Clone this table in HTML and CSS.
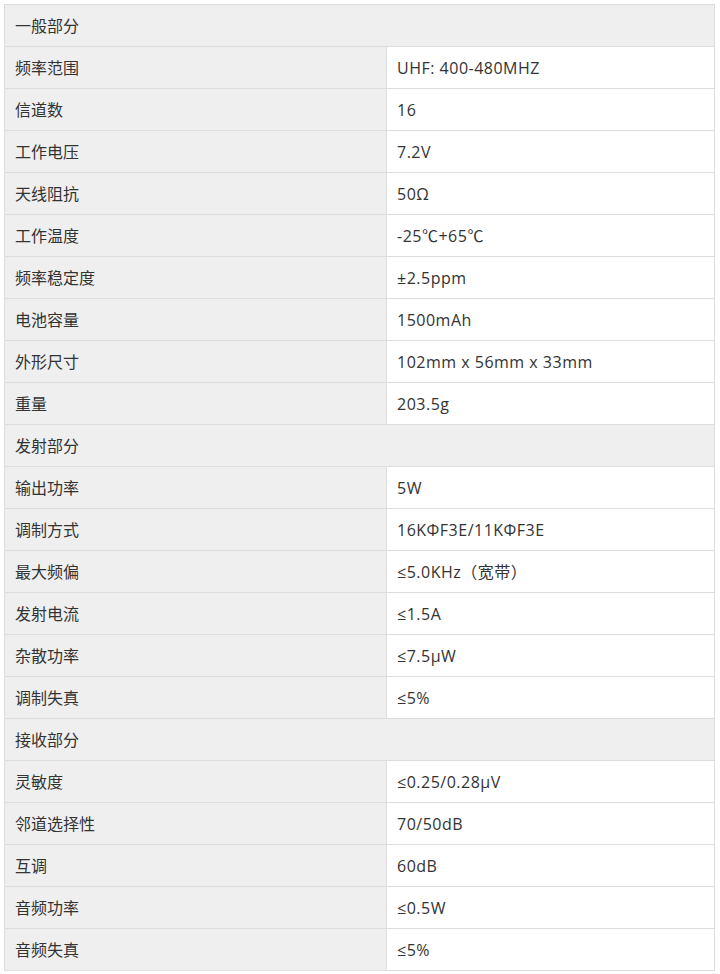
FILE: index.html
```html
<!DOCTYPE html>
<html lang="zh-CN">
<head>
<meta charset="utf-8">
<title>技术参数</title>
<link rel="stylesheet" href="styles.css">
</head>
<body>
<table class="spec">
  <colgroup><col class="col-label"><col class="col-value"></colgroup>
  <tbody>
    <tr class="section"><td colspan="2">一般部分</td></tr>
    <tr><td class="label">频率范围</td><td class="value">UHF: 400-480MHZ</td></tr>
    <tr><td class="label">信道数</td><td class="value">16</td></tr>
    <tr><td class="label">工作电压</td><td class="value">7.2V</td></tr>
    <tr><td class="label">天线阻抗</td><td class="value">50Ω</td></tr>
    <tr><td class="label">工作温度</td><td class="value">-25℃+65℃</td></tr>
    <tr><td class="label">频率稳定度</td><td class="value">±2.5ppm</td></tr>
    <tr><td class="label">电池容量</td><td class="value">1500mAh</td></tr>
    <tr><td class="label">外形尺寸</td><td class="value">102mm x 56mm x 33mm</td></tr>
    <tr><td class="label">重量</td><td class="value">203.5g</td></tr>
    <tr class="section"><td colspan="2">发射部分</td></tr>
    <tr><td class="label">输出功率</td><td class="value">5W</td></tr>
    <tr><td class="label">调制方式</td><td class="value">16KΦF3E/11KΦF3E</td></tr>
    <tr><td class="label">最大频偏</td><td class="value">≤5.0KHz（宽带）</td></tr>
    <tr><td class="label">发射电流</td><td class="value">≤1.5A</td></tr>
    <tr><td class="label">杂散功率</td><td class="value">≤7.5μW</td></tr>
    <tr><td class="label">调制失真</td><td class="value">≤5%</td></tr>
    <tr class="section"><td colspan="2">接收部分</td></tr>
    <tr><td class="label">灵敏度</td><td class="value">≤0.25/0.28μV</td></tr>
    <tr><td class="label">邻道选择性</td><td class="value">70/50dB</td></tr>
    <tr><td class="label">互调</td><td class="value">60dB</td></tr>
    <tr><td class="label">音频功率</td><td class="value">≤0.5W</td></tr>
    <tr><td class="label">音频失真</td><td class="value">≤5%</td></tr>
  </tbody>
</table>
</body>
</html>
```
FILE: styles.css
```css
html, body {
  margin: 0;
  padding: 0;
  background: #fff;
}
body {
  padding: 4px;
  font-family: "Open Sans", "Noto Sans CJK SC", sans-serif;
  font-size: 16px;
  color: #333;
}
.spec {
  border-collapse: collapse;
  width: 711px;
  table-layout: fixed;
}
.col-label { width: 382px; }
.spec td {
  border: 1px solid #ddd;
  height: 42px;
  padding: 0 10px;
  vertical-align: middle;
  box-sizing: border-box;
  line-height: 20px;
}
.spec .section td,
.spec .label {
  background: #efefef;
}
.spec .value {
  background: #fff;
  letter-spacing: 0.5px;
}
```
